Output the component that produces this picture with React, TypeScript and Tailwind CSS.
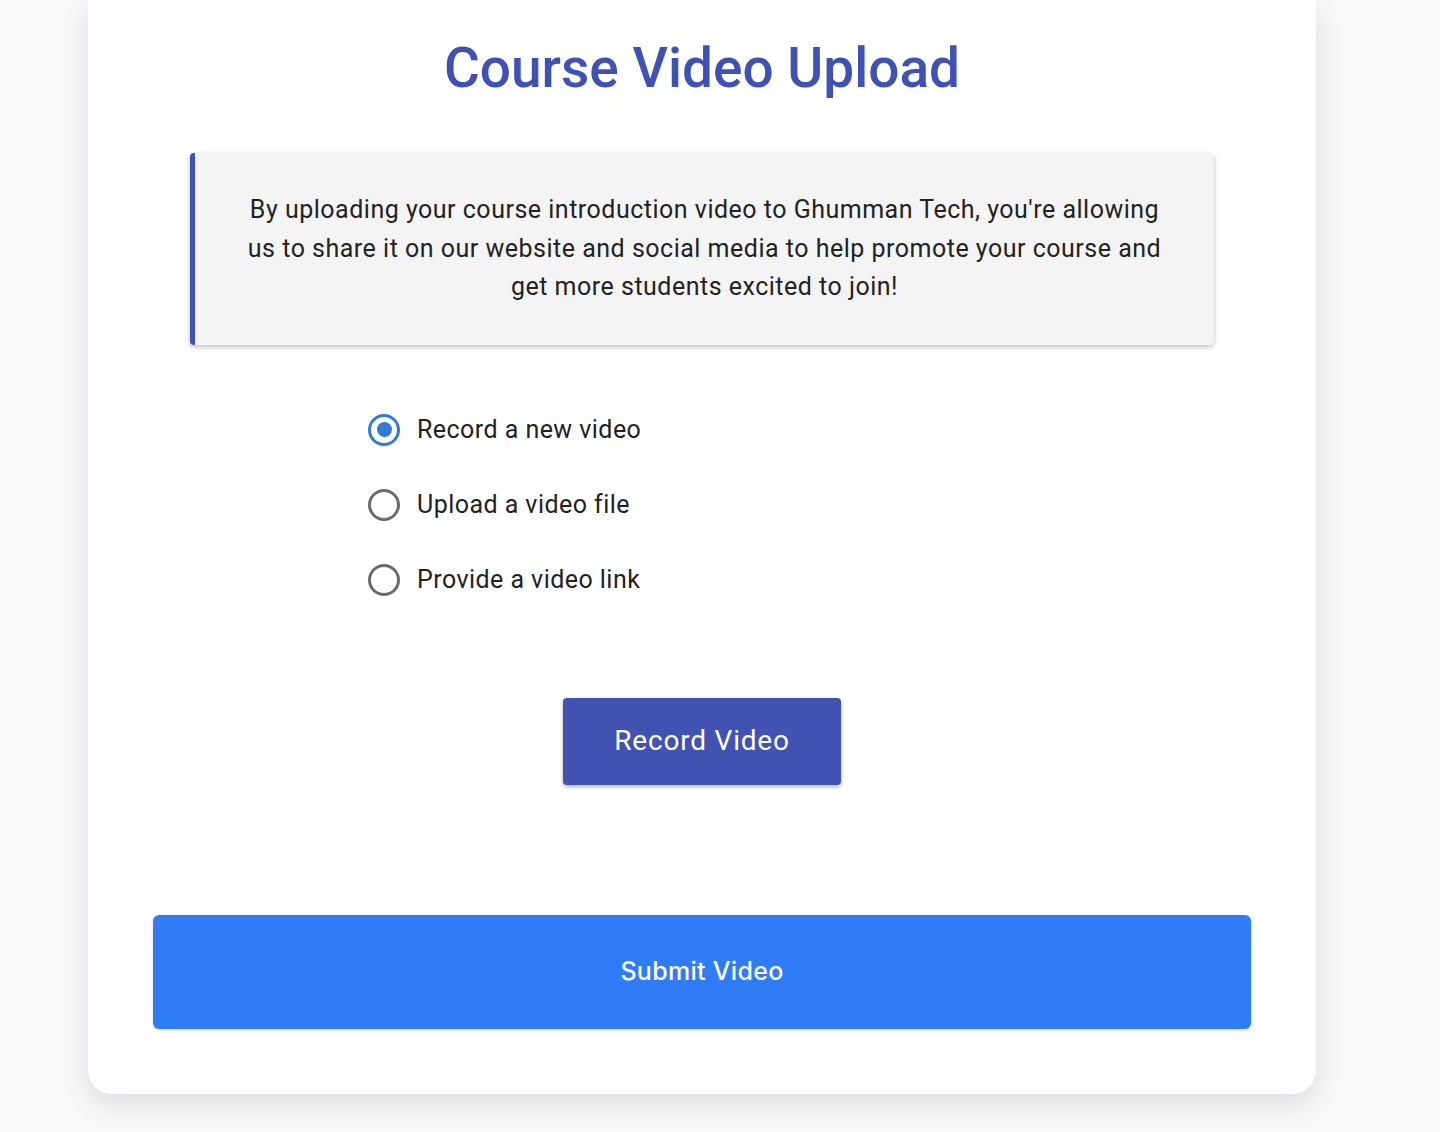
import { useState } from 'react';

const options = [
  { id: 'record', label: 'Record a new video' },
  { id: 'upload', label: 'Upload a video file' },
  { id: 'link', label: 'Provide a video link' }
];

function Radio({ checked, label, onSelect }: { checked: boolean; label: string; onSelect: () => void }) {
  return (
    <label className="flex items-center gap-[17px] h-[40px] cursor-pointer" onClick={onSelect}>
      <span
        className={
          checked
            ? 'flex items-center justify-center w-[32px] h-[32px] rounded-full border-[3px] border-[#3478d6]'
            : 'flex items-center justify-center w-[32px] h-[32px] rounded-full border-[3px] border-[#6b6b6b]'
        }
      >
        {checked && <span className="w-[15px] h-[15px] rounded-full bg-[#3478d6]" />}
      </span>
      <span className="text-[25px] tracking-[0.45px] text-[#222]">{label}</span>
    </label>
  );
}

export default function App() {
  const [mode, setMode] = useState('record');

  return (
    <div className="min-h-[1132px] bg-[#f8f9fb] font-['Roboto',sans-serif]">
      <div className="ml-[88px] w-[1228px] bg-white rounded-b-[24px] shadow-[0_10px_30px_rgba(0,0,0,0.12)] px-[65px] pt-[36px] pb-[65px]">
        <h1 className="text-center text-[55px] leading-[1.17] font-medium text-[#3f51b5]">Course Video Upload</h1>

        <div className="mx-auto mt-[53px] w-[1024px] bg-[#f4f4f4] border-l-[5px] border-[#3f51b5] rounded-[4px] shadow-[0_2px_5px_rgba(0,0,0,0.25)] py-[38px]">
          <p className="mx-auto max-w-[930px] text-center text-[25px] leading-[38.5px] tracking-[0.5px] text-[#222]">
            By uploading your course introduction video to Ghumman Tech, you're allowing us to share it on our website
            and social media to help promote your course and get more students excited to join!
          </p>
        </div>

        <div className="mt-[65px] ml-[215px] flex flex-col gap-[35px]">
          {options.map((o) => (
            <Radio key={o.id} label={o.label} checked={mode === o.id} onSelect={() => setMode(o.id)} />
          ))}
        </div>

        <div className="mt-[98px] flex justify-center">
          <button className="w-[278px] h-[87px] bg-[#4152b3] text-white text-[28px] tracking-[0.8px] rounded-[4px] shadow-[0_2px_4px_rgba(0,0,0,0.3)]">
            Record Video
          </button>
        </div>

        <button className="mt-[130px] w-full h-[114px] bg-[#307cf6] text-white text-[25px] tracking-[0.3px] font-medium font-['Inter',sans-serif] rounded-[6px] shadow-[0_1px_3px_rgba(0,0,0,0.15)]">
          Submit Video
        </button>
      </div>
    </div>
  );
}
